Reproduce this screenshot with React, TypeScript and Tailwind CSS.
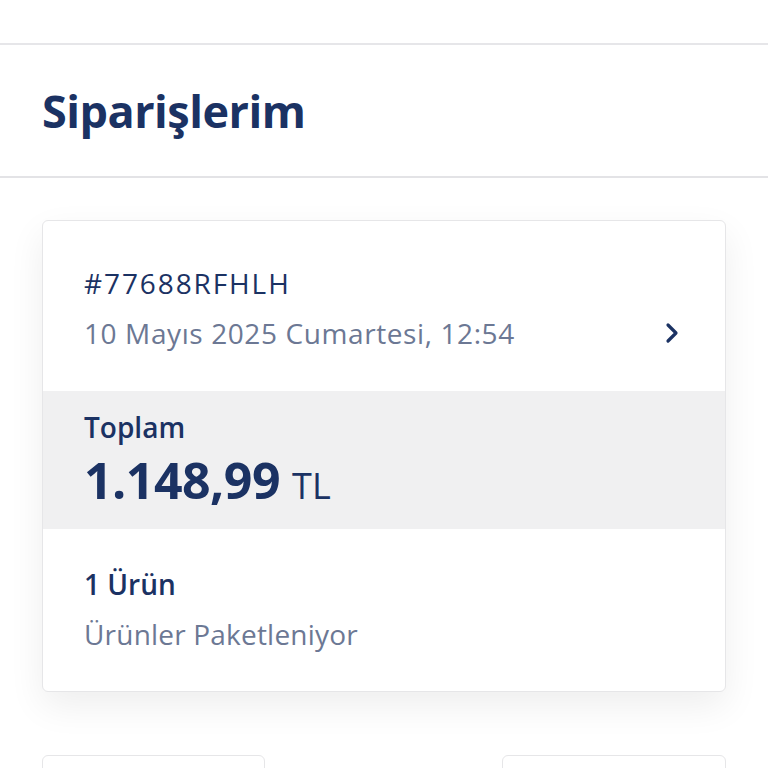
import React from "react";

const navy = "text-[#1b3263]";
const muted = "text-[#6c7894]";

function Chevron() {
  return (
    <svg width="18" height="24" viewBox="0 0 18 24" fill="none">
      <path d="M5 4l8 8-8 8" stroke="#1b3263" strokeWidth="3.2" strokeLinecap="round" strokeLinejoin="round" />
    </svg>
  );
}

export default function App() {
  return (
    <div className="w-[768px] h-[768px] overflow-hidden bg-white font-['Open_Sans','Noto_Sans',sans-serif]">
      {/* status area */}
      <div className="h-[45px] border-b-2 border-[#e6e6e9]" />

      {/* title */}
      <div className="h-[133px] flex items-center px-[42px] border-b-2 border-[#e3e3e6]">
        <h1 className={`text-[45px] font-bold leading-none tracking-[-0.5px] ${navy}`}>Siparişlerim</h1>
      </div>

      <div className="px-[42px] pt-[42px]">
        {/* order card */}
        <div className="rounded-md border border-[#e6e6e8] bg-white shadow-[0_14px_36px_rgba(0,0,0,0.07)] overflow-hidden">
          <div className="pl-[41px] pr-[44px] pt-[37px] pb-[33px]">
            <div className={`text-[28px] leading-[50px] tracking-[1.9px] ${navy}`}>#77688RFHLH</div>
            <div className="flex items-center justify-between">
              <span className={`text-[28px] leading-[50px] tracking-[0.6px] ${muted}`}>10 Mayıs 2025 Cumartesi, 12:54</span>
              <Chevron />
            </div>
          </div>

          <div className="bg-[#f0f0f1] px-[41px] pt-[18px] pb-[21px]">
            <div className={`text-[28px] font-semibold leading-[36px] ${navy}`}>Toplam</div>
            <div className={`mt-[7px] h-[56px] flex items-baseline leading-[56px] ${navy}`}>
              <span className="text-[50px] font-bold tracking-[-0.5px]">1.148,99</span>
              <span className="text-[36px] ml-[12px]">TL</span>
            </div>
          </div>

          <div className="px-[41px] pt-[30px] pb-[32px]">
            <div className={`text-[28px] font-semibold leading-[50px] ${navy}`}>1 Ürün</div>
            <div className={`text-[28px] leading-[50px] tracking-[0.2px] ${muted}`}>Ürünler Paketleniyor</div>
          </div>
        </div>

        {/* next row, cut off */}
        <div className="mt-[63px] flex justify-between">
          <div className="w-[223px] h-[40px] rounded-md border border-[#e6e6e8] bg-white" />
          <div className="w-[224px] h-[40px] rounded-md border border-[#e6e6e8] bg-white" />
        </div>
      </div>
    </div>
  );
}
